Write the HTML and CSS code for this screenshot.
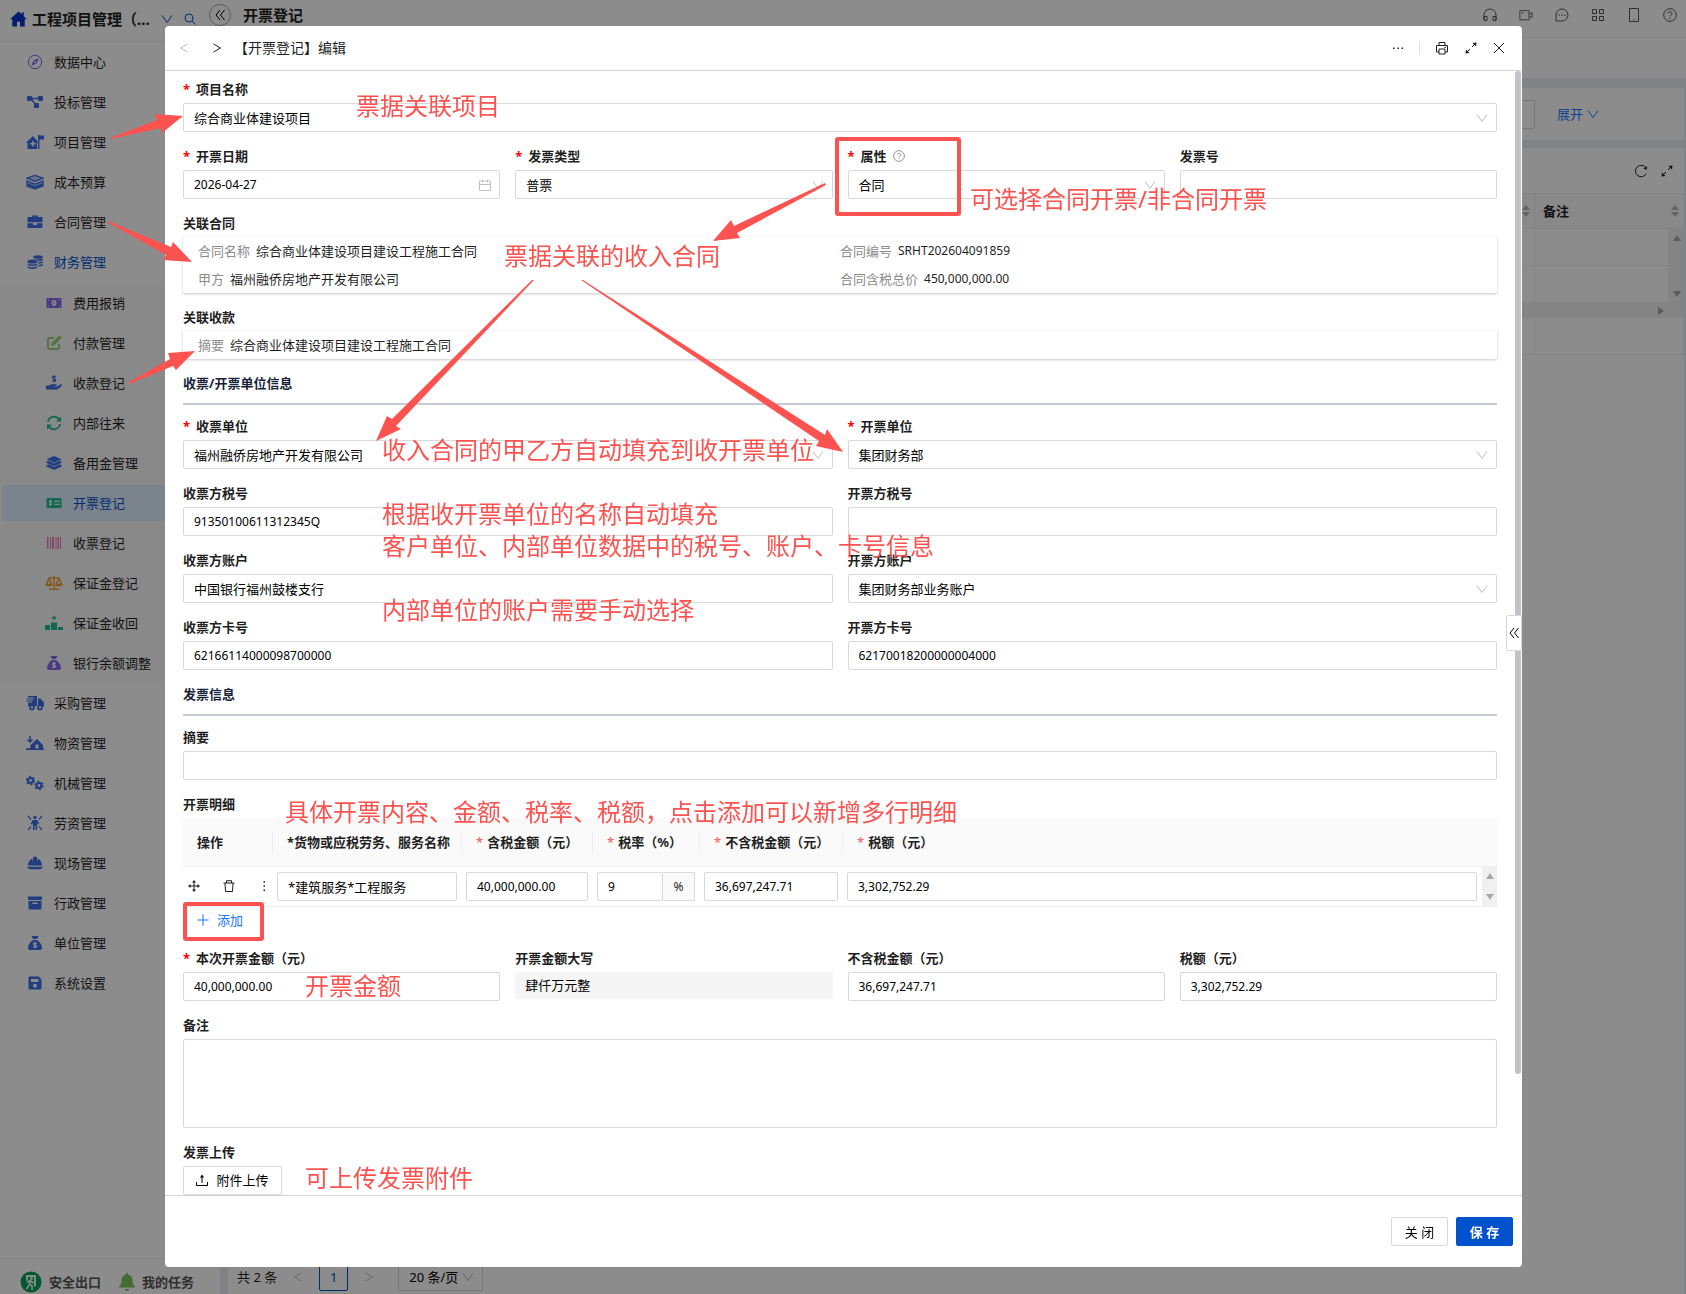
FILE: index.html
```html
<!DOCTYPE html>
<html lang="zh">

<head>
    <meta charset="UTF-8">
    <meta name="viewport" content="width=device-width, initial-scale=1.0">
    <title>开票登记 - 工程项目管理</title>
    <link rel="stylesheet" href="styles.css">
</head>

<body>
    <!-- 图标库 -->
    <svg class="sprite" aria-hidden="true">
        <symbol id="i-home" viewBox="0 0 18 16"><path fill="currentColor" d="M9 0 0 8.3h2.4V16h5v-5h3.2v5h5V8.3H18L14.6 5V1h-2.2v2z"/></symbol>
        <symbol id="i-down" viewBox="0 0 12 12"><path class="ln" d="M1 2.5 6 9.5 11 2.5"/></symbol>
        <symbol id="i-left" viewBox="0 0 12 12"><path class="ln" d="M9.500 2 2.500 6l7 4"/></symbol>
        <symbol id="i-right" viewBox="0 0 12 12"><path class="ln" d="M2.500 2l7 4-7 4"/></symbol>
        <symbol id="i-search" viewBox="0 0 12 12"><circle class="ln" cx="5" cy="5" r="4"/><path class="ln" d="m8 8 3.500 3.500"/></symbol>
        <symbol id="i-dleft" viewBox="0 0 12 12"><path class="ln" d="M6 1 2 6l4 5M10.500 1l-4 5 4 5"/></symbol>
        <symbol id="i-compass" viewBox="0 0 16 16"><circle class="ln" cx="8" cy="8" r="6.700"/><path fill="currentColor" fill-rule="evenodd" d="M11.800 4.200 9.500 9.500 4.200 11.800 6.500 6.500zM8 7a1 1 0 1 0 0 2 1 1 0 0 0 0-2z"/></symbol>
        <symbol id="i-nodes" viewBox="0 0 18 16"><g fill="currentColor"><rect x="1" y="2" width="5" height="5" rx="1"/><rect x="12" y="2" width="5" height="5" rx="1"/><rect x="8" y="9" width="5" height="5" rx="1"/><path d="M5 3.700h8v1.500H5zM5 5.500l1.300-.6L10 10.200l-1.400.6z"/></g></symbol>
        <symbol id="i-house" viewBox="0 0 18 16"><path fill="currentColor" fill-rule="evenodd" d="M7 2 0 8.500h1.500V15h9.500V8.500h1.500zM6.200 7h1.600v2h2v1.600h-2v2H6.200v-2h-2V9h2zM12 15V1h1.400v.6H18v4h-4.600V15z"/></symbol>
        <symbol id="i-book" viewBox="0 0 18 16"><g fill="none" stroke="currentColor" stroke-width="1.300"><path fill="currentColor" fill-opacity=".3" d="M1 4.200 9 1.500l8 2.700-8 3z"/><path fill="currentColor" fill-opacity=".5" d="M1 7v5l8 3 8-3V7l-8 3z"/><path stroke-width="2" d="M1.500 10.500 9 13.500l7.500-3"/></g></symbol>
        <symbol id="i-case" viewBox="0 0 16 16"><path fill="currentColor" fill-rule="evenodd" d="M5 3V1.500h6V3h3.500c.5 0 1 .5 1 1v4.200H.5V4c0-.5.5-1 1-1zM6.500 3h3v-.3h-3zM.5 9.200H6V11h4V9.200h5.500V13c0 .5-.5 1-1 1h-13c-.5 0-1-.5-1-1z"/></symbol>
        <symbol id="i-coins" viewBox="0 0 16 16"><g fill="currentColor"><ellipse cx="11" cy="3" rx="4.800" ry="1.800"/><ellipse cx="5.500" cy="7.500" rx="5" ry="2"/><path d="M.5 9c1.500 2 8.500 2 10 0v1.500c-1.500 2-8.500 2-10 0zM.5 11.800c1.500 2 8.500 2 10 0v1.500c-1.500 2.300-8.500 2.300-10 0zM6.500 4.500c2 1.100 7.500 1.100 9.300-.3V6c-1 .8-2.500 1-4.300 1-.6-1-2.600-1.900-5-2zM11.500 8c1.700 0 3.300-.3 4.300-1v1.500c-.7.800-2.500 1.200-4.300 1.200zM11.500 10.700c1.700 0 3.300-.3 4.300-1v1.500c-.7.800-2.500 1.200-4.300 1.200z"/></g></symbol>
        <symbol id="i-bill" viewBox="0 0 16 16"><path fill="currentColor" fill-rule="evenodd" d="M1.500 3h13c.6 0 1 .4 1 1v8c0 .6-.4 1-1 1h-13c-.6 0-1-.4-1-1V4c0-.6.4-1 1-1zM8 5a2.500 3 0 1 0 0 6 2.500 3 0 0 0 0-6zM2 4.500V6l1.500-1.500zM14 4.500V6l-1.500-1.500zM2 11.500V10l1.500 1.500zM14 11.500V10l-1.500 1.500z"/><path stroke="currentColor" d="M8 6.500v3"/></symbol>
        <symbol id="i-edit" viewBox="0 0 16 16"><path fill="none" stroke="currentColor" stroke-width="1.800" d="M8 3H3.500C2.500 3 2 3.500 2 4.500v8c0 1 .5 1.500 1.500 1.500h8c1 0 1.500-.5 1.500-1.500V9"/><path fill="currentColor" d="M12.700 1c.5-.5 1-.5 1.500 0l.9.9c.5.500.5 1 0 1.500L8.500 10 5 11l1-3.500z"/></symbol>
        <symbol id="i-hand" viewBox="0 0 16 16"><path fill="currentColor" d="M0 10.500h3c1.500-1.500 3-1.500 4.500-1.200h2.300c1.400 0 1.400 1.700 0 1.700H7.500v.5h3.800l3-2c1.300-.7 2.200.5 1.200 1.400L12 14c-.5.300-1 .5-1.500.5H0z"/><path fill="none" stroke="currentColor" stroke-width="1.200" d="M10 1.800C8.500.800 6.500 1.300 6.500 2.500c0 1.600 3.300 1 3.300 2.500 0 1.300-2.300 1.500-3.600.5M8.100 0v7.300"/></symbol>
        <symbol id="i-sync" viewBox="0 0 16 16"><g fill="none" stroke="currentColor" stroke-width="1.700"><path d="M2 7a6 6 0 0 1 11-2.500M14 9a6 6 0 0 1-11 2.500"/></g><path fill="currentColor" d="M15 1.500V6.500H10zM1 14.500V9.500h5z"/></symbol>
        <symbol id="i-layers" viewBox="0 0 16 16"><path fill="currentColor" d="M8 1l7.500 3.300L8 7.700.5 4.300zM.5 6.700l2-1L8 8.400l5.500-2.700 2 1.100v1L8 11.200.5 7.900zM.5 10.300l2-1L8 12l5.500-2.700 2 1v1.200L8 15 .5 11.500z"/></symbol>
        <symbol id="i-check" viewBox="0 0 16 16"><path fill="currentColor" fill-rule="evenodd" d="M1.500 3h13c.6 0 1 .4 1 1v8c0 .6-.4 1-1 1h-13c-.6 0-1-.4-1-1V4c0-.6.4-1 1-1zM8 5.800v1.300h6V5.800zM8 8.700V10h6V8.700z"/><path fill="none" stroke="#fff" d="M5.800 6.200C4.500 5.300 3 6 3.200 6.900c.2 1.200 2.600.9 2.500 2.200-.1.900-1.700 1.100-2.800.4M4.500 4.700v6.600"/></symbol>
        <symbol id="i-bars" viewBox="0 0 16 16"><path fill="currentColor" d="M1 2h1.500v12H1zM4 2h1v12H4zM6 2h2v12H6zM9.500 2h1v12h-1zM11.500 2H13v12h-1.500zM14 2h1v12h-1z"/></symbol>
        <symbol id="i-scale" viewBox="0 0 18 16"><path fill="none" stroke="currentColor" stroke-width="1.500" d="M3 3h12M9 1v13M4 14.200h10M4 3.500 1.200 9.500h5.600zM14 3.500l-2.800 6h5.600z"/><path fill="currentColor" d="M.5 9.200h7c-.5 3-6.500 3-7 0zM10.500 9.200h7c-.5 3-6.500 3-7 0z"/></symbol>
        <symbol id="i-rank" viewBox="0 0 18 16"><path fill="currentColor" d="M0 10h5v5H0zM6 7.500h6V15H6zM13 12h5v3h-5zM9 0l.8 1.700 1.800.2-1.300 1.300.3 1.800L9 4.100 7.400 5l.3-1.800L6.400 1.900l1.800-.2z"/></symbol>
        <symbol id="i-bag" viewBox="0 0 16 16"><path fill="currentColor" d="M4.500 1h7L10 4H6zM6 5h4c3 2 5 5 5 8 0 1.300-.7 2-2 2H3c-1.300 0-2-.7-2-2 0-3 2-6 5-8z"/><path fill="none" stroke="#fff" stroke-width="1.100" d="M9.800 8.500C8.500 7.500 6.500 7.800 6.500 9c0 1.500 3.200.8 3.200 2.300 0 1.200-2.200 1.300-3.500.5M8 6.800v6.500"/></symbol>
        <symbol id="i-truck" viewBox="0 0 18 16"><path fill="currentColor" d="M2 1h9v10H2V7.500h4V6.500H0v-1h7v-1H1v-1h7v-1H2zM12 3.500h2.500L18 7.500V11.500h-6z"/><g fill="#fff" stroke="currentColor" stroke-width="1.700"><circle cx="6" cy="12.500" r="2"/><circle cx="14" cy="12.500" r="2"/></g></symbol>
        <symbol id="i-store" viewBox="0 0 18 16"><path fill="currentColor" fill-rule="evenodd" d="M0 13.200h4.500V10L11 4l6 6v3.200h1V15H0zM9.500 9.500v4h3v-4z"/><path fill="none" stroke="currentColor" stroke-width="1.500" d="M4 1v6M1.500 4.500 4 7l2.500-2.500"/></symbol>
        <symbol id="i-gears" viewBox="0 0 18 16"><g fill="none" stroke="currentColor"><circle cx="4.500" cy="5.500" r="2.500" stroke-width="2.200"/><circle cx="4.500" cy="5.500" r="4" stroke-width="1.500" stroke-dasharray="2 2.190"/><circle cx="13" cy="10.500" r="2.500" stroke-width="2.200"/><circle cx="13" cy="10.500" r="4" stroke-width="1.500" stroke-dasharray="2 2.190"/></g></symbol>
        <symbol id="i-man" viewBox="0 0 16 16"><circle cx="8" cy="2.500" r="1.700" fill="currentColor"/><path fill="currentColor" d="M5.500 5h5l1.800 4-1.200.6-1-1.800V15H8.500v-4h-1v4H5.900V7.800l-1 1.800L3.700 9z"/><path stroke="currentColor" stroke-width="1.200" d="m1 1 3 3.500M15 1l-3 3.500M1 15l3-3.500M15 15l-3-3.500"/></symbol>
        <symbol id="i-helmet" viewBox="0 0 16 16"><path fill="currentColor" d="M1 10.500C1 7 3 4.500 5.300 3.800L6 8V2.500c0-.5.300-.8.800-.8h2.400c.5 0 .8.300.8.800V8l.7-4.200C13 4.500 15 7 15 10.500zM0 11.700h16c-1 2.100-2.500 2.500-4 2.500H4c-1.500 0-3-.4-4-2.500z"/></symbol>
        <symbol id="i-box" viewBox="0 0 16 16"><path fill="currentColor" fill-rule="evenodd" d="M1 1.500h14V5H1zM1.500 6h13v7c0 .8-.5 1.500-1.500 1.500H3c-1 0-1.500-.7-1.500-1.500zM5.500 7.500V9h5V7.500z"/></symbol>
        <symbol id="i-disk" viewBox="0 0 16 16"><path fill="currentColor" fill-rule="evenodd" d="M3 1.500h8.500l3 3V13c0 .9-.6 1.500-1.500 1.500H3c-.9 0-1.500-.6-1.500-1.500V3c0-.9.600-1.500 1.500-1.500zM4 4v3h7.500V4zM8 8.700a2 2 0 1 0 0 4 2 2 0 0 0 0-4z"/></symbol>
        <symbol id="i-exit" viewBox="0 0 22 22"><circle cx="11" cy="11" r="10.500" fill="#0a9f5d"/><path fill="#e8fff2" d="M6 4h10v11l-2 1V6H8v3l-2 1z"/><circle cx="11.500" cy="7.500" r="1.400" fill="#e8fff2"/><path fill="none" stroke="#e8fff2" stroke-width="1.600" d="M11 9.500 9.500 13l2.500 2v4M9.500 13.500l-3 4.500M7 11.500l3-2 3.500 2.500"/></symbol>
        <symbol id="i-bell" viewBox="0 0 16 18"><path fill="currentColor" d="M7 0h2v1.500c3 .5 4.500 2.700 4.500 5.500 0 4 .7 5 2.500 6.500v1H0v-1C1.800 12 2.500 11 2.500 7 2.500 4.200 4 2 7 1.500zM6 16h4c0 2.500-4 2.500-4 0z"/></symbol>
        <symbol id="i-phone" viewBox="0 0 14 14"><path class="ln" d="M1 12V7a6 6 0 0 1 12 0v5M1 8.500h3v4H1zM10 8.500h3v4h-3z"/></symbol>
        <symbol id="i-video" viewBox="0 0 16 14"><path class="ln" d="M1 2h10.500v10.500H1zM3 4.500h2.500M11.500 6 15 4.500v5.500l-3.500-1.500"/></symbol>
        <symbol id="i-chat" viewBox="0 0 14 14"><path class="ln" d="M1 13V7a6 6 0 1 1 6 6z"/><path fill="currentColor" d="M3.500 6.400h1.300v1.300H3.500zM6.400 6.400h1.300v1.300H6.400zM9.300 6.400h1.300v1.300H9.300z"/></symbol>
        <symbol id="i-apps" viewBox="0 0 14 14"><path class="ln" d="M1.500 1.500h4v4h-4zM8.500 1.500h4v4h-4zM1.500 8.500h4v4h-4zM8.500 8.500h4v4h-4z"/></symbol>
        <symbol id="i-mobile" viewBox="0 0 14 14"><path class="ln" d="M2.500.5h9v13h-9zM6.500 11.500h1"/></symbol>
        <symbol id="i-help" viewBox="0 0 14 14"><circle class="ln" cx="7" cy="7" r="6.300"/><path class="ln" d="M5 5.700c0-2.500 4-2.500 4 0C9 7 7 6.800 7 8.500M7 9.700v1.200"/></symbol>
        <symbol id="i-print" viewBox="0 0 14 14"><path class="ln" d="M4 4.500V1.500h6v3M4 11H1.500V4.500h11V11H10M4 8h6v5H4zM9.500 6.300h1.500"/></symbol>
        <symbol id="i-expand" viewBox="0 0 14 14"><path fill="currentColor" d="M8.500 2 12.500 1.500 12 5.500zM1.500 12.500 2 8.500 5.500 12z"/><path class="ln" d="M11.500 2.500 8 6M6 8l-3.500 3.500"/></symbol>
        <symbol id="i-close" viewBox="0 0 12 12"><path class="ln" d="m1 1 10 10M11 1 1 11"/></symbol>
        <symbol id="i-dots" viewBox="0 0 12 12"><path fill="currentColor" d="M1 5.500h1.500V7H1zM5.300 5.500h1.500V7H5.300zM9.500 5.500H11V7H9.500z"/></symbol>
        <symbol id="i-vdots" viewBox="0 0 12 12"><path fill="currentColor" d="M5.500 1H7v1.500H5.500zM5.500 5.300H7v1.500H5.500zM5.500 9.500H7V11H5.500z"/></symbol>
        <symbol id="i-reload" viewBox="0 0 14 14"><path class="ln" d="M12.300 9.500A5.700 5.700 0 1 1 12 4"/><path fill="currentColor" d="m13 2-.3 4L9.500 4.500z"/></symbol>
        <symbol id="i-sort" viewBox="0 0 8 12"><path fill="currentColor" d="M4 0l4 5H0zM4 12l4-5H0z"/></symbol>
        <symbol id="i-cal" viewBox="0 0 12 12"><path class="ln" d="M.5 2h11v9.500H.5zM.5 5.500h11M3.500.5v3M8.500.5v3"/></symbol>
        <symbol id="i-move" viewBox="0 0 12 12"><path class="ln" d="M6 1v10M1 6h10"/><path fill="currentColor" d="m6 0 2 2.500H4zM6 12l2-2.500H4zM0 6l2.500-2v4zM12 6 9.500 4v4z"/></symbol>
        <symbol id="i-trash" viewBox="0 0 12 12"><path class="ln" d="M.5 3h11M3.500 3V.7h5V3M2 3l.5 8.500h7L10 3"/></symbol>
        <symbol id="i-plus" viewBox="0 0 12 12"><path class="ln" d="M6 .5v11M.5 6h11"/></symbol>
        <symbol id="i-upload" viewBox="0 0 12 12"><path class="ln" d="M.5 8v3.500h11V8M6 9V2.500"/><path fill="currentColor" d="m6 .5 2 3H4z"/></symbol>
        <symbol id="i-tri" viewBox="0 0 8 8"><path fill="currentColor" d="m4 1 4 6H0z"/></symbol>
    </svg>

    <div class="app">
        <!-- 左侧菜单 -->
        <aside class="sidebar">
            <div class="brand">
                <svg class="brand-icon"><use href="#i-home"/></svg>
                <strong>工程项目管理（...</strong>
                <svg class="icon blue"><use href="#i-down"/></svg>
                <svg class="icon blue"><use href="#i-search"/></svg>
            </div>
            <nav class="menu">
                <a href="#"><svg class="c-purple"><use href="#i-compass"/></svg>数据中心</a>
                <a href="#"><svg><use href="#i-nodes"/></svg>投标管理</a>
                <a href="#"><svg><use href="#i-house"/></svg>项目管理</a>
                <a href="#"><svg><use href="#i-book"/></svg>成本预算</a>
                <a href="#"><svg><use href="#i-case"/></svg>合同管理</a>
                <a href="#" class="open"><svg><use href="#i-coins"/></svg>财务管理</a>
            </nav>
            <nav class="menu submenu">
                <a href="#"><svg class="c-purple"><use href="#i-bill"/></svg>费用报销</a>
                <a href="#"><svg class="c-green"><use href="#i-edit"/></svg>付款管理</a>
                <a href="#"><svg><use href="#i-hand"/></svg>收款登记</a>
                <a href="#"><svg class="c-teal"><use href="#i-sync"/></svg>内部往来</a>
                <a href="#"><svg><use href="#i-layers"/></svg>备用金管理</a>
                <a href="#" class="active"><svg class="c-teal"><use href="#i-check"/></svg>开票登记</a>
                <a href="#"><svg class="c-pink"><use href="#i-bars"/></svg>收票登记</a>
                <a href="#"><svg class="c-orange"><use href="#i-scale"/></svg>保证金登记</a>
                <a href="#"><svg class="c-teal"><use href="#i-rank"/></svg>保证金收回</a>
                <a href="#"><svg class="c-purple"><use href="#i-bag"/></svg>银行余额调整</a>
            </nav>
            <nav class="menu">
                <a href="#"><svg><use href="#i-truck"/></svg>采购管理</a>
                <a href="#"><svg><use href="#i-store"/></svg>物资管理</a>
                <a href="#"><svg><use href="#i-gears"/></svg>机械管理</a>
                <a href="#"><svg><use href="#i-man"/></svg>劳资管理</a>
                <a href="#"><svg><use href="#i-helmet"/></svg>现场管理</a>
                <a href="#"><svg><use href="#i-box"/></svg>行政管理</a>
                <a href="#"><svg><use href="#i-bag"/></svg>单位管理</a>
                <a href="#"><svg><use href="#i-disk"/></svg>系统设置</a>
            </nav>
            <div class="side-foot">
                <a href="#"><svg class="exit"><use href="#i-exit"/></svg>安全出口</a>
                <a href="#"><svg class="bell"><use href="#i-bell"/></svg>我的任务</a>
            </div>
        </aside>

        <!-- 列表页 -->
        <div class="page">
            <header class="topbar">
                <button type="button" class="fold" aria-label="收起菜单"><svg class="icon"><use href="#i-dleft"/></svg></button>
                <h1>开票登记</h1>
                <div class="tools">
                    <svg><use href="#i-phone"/></svg>
                    <svg><use href="#i-video"/></svg>
                    <svg><use href="#i-chat"/></svg>
                    <svg><use href="#i-apps"/></svg>
                    <svg><use href="#i-mobile"/></svg>
                    <svg><use href="#i-help"/></svg>
                </div>
            </header>
            <div class="tabs"></div>
            <div class="content">
                <div class="filter">
                    <input type="text" aria-label="查询条件">
                    <a href="#">展开 <svg class="icon"><use href="#i-down"/></svg></a>
                </div>
                <div class="list">
                    <div class="list-tools">
                        <svg><use href="#i-reload"/></svg>
                        <svg><use href="#i-expand"/></svg>
                    </div>
                    <div class="list-row list-head">
                        <div><svg class="sort"><use href="#i-sort"/></svg></div>
                        <div><b>备注</b><svg class="sort"><use href="#i-sort"/></svg></div>
                    </div>
                    <div class="list-scroll">
                        <div class="list-rows">
                            <div class="list-row"><div></div><div></div></div>
                            <div class="list-row"><div></div><div></div></div>
                        </div>
                        <div class="vbar"><svg><use href="#i-tri"/></svg><svg class="flip"><use href="#i-tri"/></svg></div>
                    </div>
                    <div class="hbar"><svg class="turn"><use href="#i-tri"/></svg></div>
                    <div class="list-row"><div></div><div></div></div>
                    <div class="pager">
                        <span>共 2 条</span>
                        <svg class="icon"><use href="#i-left"/></svg>
                        <button type="button">1</button>
                        <svg class="icon"><use href="#i-right"/></svg>
                        <div class="field-box page-size">
                            <select aria-label="每页条数"><option>20 条/页</option></select>
                            <svg class="icon"><use href="#i-down"/></svg>
                        </div>
                    </div>
                </div>
            </div>
        </div>
    </div>

    <!-- 编辑弹窗 -->
    <div class="mask">
        <form class="modal">
            <header class="modal-head">
                <svg class="icon dim"><use href="#i-left"/></svg>
                <svg class="icon"><use href="#i-right"/></svg>
                <h2>【开票登记】编辑</h2>
                <svg class="icon"><use href="#i-dots"/></svg>
                <i class="split"></i>
                <svg><use href="#i-print"/></svg>
                <svg><use href="#i-expand"/></svg>
                <svg class="icon"><use href="#i-close"/></svg>
            </header>

            <div class="modal-body">
                <div class="item">
                    <label for="project" class="required">项目名称</label>
                    <div class="field-box">
                        <select id="project"><option>综合商业体建设项目</option></select>
                        <svg class="icon"><use href="#i-down"/></svg>
                    </div>
                </div>
                <div class="grid four">
                    <div class="item">
                        <label for="date" class="required">开票日期</label>
                        <div class="field-box">
                            <input type="text" id="date" value="2026-04-27">
                            <svg class="icon"><use href="#i-cal"/></svg>
                        </div>
                    </div>
                    <div class="item">
                        <label for="type" class="required">发票类型</label>
                        <div class="field-box">
                            <select id="type"><option>普票</option></select>
                            <svg class="icon"><use href="#i-down"/></svg>
                        </div>
                    </div>
                    <div class="item">
                        <label for="attr" class="required">属性 <svg class="icon help"><use href="#i-help"/></svg></label>
                        <div class="field-box">
                            <select id="attr"><option>合同</option></select>
                            <svg class="icon"><use href="#i-down"/></svg>
                        </div>
                    </div>
                    <div class="item">
                        <label for="invoice-no">发票号</label>
                        <input type="text" id="invoice-no">
                    </div>
                </div>
                <div class="item">
                    <h3>关联合同</h3>
                    <dl class="card">
                        <div><dt>合同名称</dt><dd>综合商业体建设项目建设工程施工合同</dd></div>
                        <div><dt>合同编号</dt><dd class="num">SRHT202604091859</dd></div>
                        <div><dt>甲方</dt><dd>福州融侨房地产开发有限公司</dd></div>
                        <div><dt>合同含税总价</dt><dd class="num">450,000,000.00</dd></div>
                    </dl>
                </div>
                <div class="item">
                    <h3>关联收款</h3>
                    <dl class="card">
                        <div><dt>摘要</dt><dd>综合商业体建设项目建设工程施工合同</dd></div>
                    </dl>
                </div>

                <h3 class="section">收票/开票单位信息</h3>
                <div class="grid two">
                    <div class="item">
                        <label for="recv-unit" class="required">收票单位</label>
                        <div class="field-box">
                            <select id="recv-unit"><option>福州融侨房地产开发有限公司</option></select>
                            <svg class="icon"><use href="#i-down"/></svg>
                        </div>
                    </div>
                    <div class="item">
                        <label for="send-unit" class="required">开票单位</label>
                        <div class="field-box">
                            <select id="send-unit"><option>集团财务部</option></select>
                            <svg class="icon"><use href="#i-down"/></svg>
                        </div>
                    </div>
                    <div class="item">
                        <label for="recv-tax">收票方税号</label>
                        <input type="text" id="recv-tax" value="91350100611312345Q">
                    </div>
                    <div class="item">
                        <label for="send-tax">开票方税号</label>
                        <input type="text" id="send-tax">
                    </div>
                    <div class="item">
                        <label for="recv-account">收票方账户</label>
                        <input type="text" id="recv-account" class="cn" value="中国银行福州鼓楼支行">
                    </div>
                    <div class="item">
                        <label for="send-account">开票方账户</label>
                        <div class="field-box">
                            <select id="send-account"><option>集团财务部业务账户</option></select>
                            <svg class="icon"><use href="#i-down"/></svg>
                        </div>
                    </div>
                    <div class="item">
                        <label for="recv-card">收票方卡号</label>
                        <input type="text" id="recv-card" value="62166114000098700000">
                    </div>
                    <div class="item">
                        <label for="send-card">开票方卡号</label>
                        <input type="text" id="send-card" value="62170018200000004000">
                    </div>
                </div>

                <h3 class="section">发票信息</h3>
                <div class="item">
                    <label for="summary">摘要</label>
                    <input type="text" id="summary">
                </div>
                <div class="item">
                    <h3>开票明细</h3>
                    <div class="detail">
                        <table>
                            <thead>
                                <tr>
                                    <th class="w-op">操作</th>
                                    <th class="w-name">*货物或应税劳务、服务名称</th>
                                    <th class="w-amount"><em>*</em>含税金额（元）</th>
                                    <th class="w-rate"><em>*</em>税率（%）</th>
                                    <th class="w-net"><em>*</em>不含税金额（元）</th>
                                    <th><em>*</em>税额（元）</th>
                                    <th class="w-bar"></th>
                                </tr>
                            </thead>
                            <tbody>
                                <tr>
                                    <td>
                                        <div class="ops">
                                            <svg class="icon"><use href="#i-move"/></svg>
                                            <svg class="icon"><use href="#i-trash"/></svg>
                                            <svg class="icon"><use href="#i-vdots"/></svg>
                                        </div>
                                    </td>
                                    <td><input type="text" class="cn" aria-label="货物或应税劳务、服务名称" value="*建筑服务*工程服务"></td>
                                    <td><input type="text" aria-label="含税金额" value="40,000,000.00"></td>
                                    <td>
                                        <div class="rate"><input type="text" aria-label="税率" value="9"><span>%</span></div>
                                    </td>
                                    <td><input type="text" aria-label="不含税金额" value="36,697,247.71"></td>
                                    <td><input type="text" aria-label="税额" value="3,302,752.29"></td>
                                    <td class="bar"><div class="vbar"><svg><use href="#i-tri"/></svg><svg class="flip"><use href="#i-tri"/></svg></div></td>
                                </tr>
                            </tbody>
                        </table>
                        <button type="button" class="add"><svg class="icon"><use href="#i-plus"/></svg>添加</button>
                    </div>
                </div>
                <div class="grid four">
                    <div class="item">
                        <label for="amount" class="required">本次开票金额（元）</label>
                        <input type="text" id="amount" value="40,000,000.00">
                    </div>
                    <div class="item">
                        <label for="amount-cn">开票金额大写</label>
                        <output id="amount-cn">肆仟万元整</output>
                    </div>
                    <div class="item">
                        <label for="net">不含税金额（元）</label>
                        <input type="text" id="net" value="36,697,247.71">
                    </div>
                    <div class="item">
                        <label for="tax">税额（元）</label>
                        <input type="text" id="tax" value="3,302,752.29">
                    </div>
                </div>
                <div class="item">
                    <label for="remark">备注</label>
                    <textarea id="remark"></textarea>
                </div>
                <div class="item">
                    <h3>发票上传</h3>
                    <button type="button" class="upload"><svg class="icon"><use href="#i-upload"/></svg>附件上传</button>
                </div>
            </div>

            <footer class="modal-foot">
                <button type="button">关 闭</button>
                <button type="submit" class="primary">保 存</button>
            </footer>

            <div class="scroll-thumb"></div>
            <button type="button" class="side-tab" aria-label="展开侧栏"><svg class="icon"><use href="#i-dleft"/></svg></button>
        </form>
    </div>

    <!-- 批注 -->
    <div class="notes">
        <svg>
            <g fill="#fc5350">
                <path d="M110 138 157 120 155 114 183 116 162 133 161 128 111 139z"/>
                <path d="M108 221 171 247 173 242 192 262 163 260 166 255 107 222z"/>
                <path d="M129 382 170 359 168 353 195 351 176 370 173 366 129 384z"/>
                <path d="M825 183 734 226 731 220 713 241 740 238 737 233 826 185z"/>
                <path d="M532 280 392 419 387 416 376 441 401 429 396 426 534 280z"/>
                <path d="M583 280 825 435 827 429 843 452 816 446 819 441 581 280z"/>
            </g>
            <g fill="none" stroke="#fc5350" stroke-width="4">
                <rect x="837" y="139" width="122" height="75" rx="1"/>
                <rect x="185" y="904" width="77" height="35" rx="1"/>
            </g>
        </svg>
        <p class="n-project">票据关联项目</p>
        <p class="n-attr">可选择合同开票/非合同开票</p>
        <p class="n-contract">票据关联的收入合同</p>
        <p class="n-unit">收入合同的甲乙方自动填充到收开票单位</p>
        <p class="n-fill">根据收开票单位的名称自动填充<br>客户单位、内部单位数据中的税号、账户、卡号信息</p>
        <p class="n-account">内部单位的账户需要手动选择</p>
        <p class="n-detail">具体开票内容、金额、税率、税额，点击添加可以新增多行明细</p>
        <p class="n-amount">开票金额</p>
        <p class="n-upload">可上传发票附件</p>
    </div>
</body>

</html>
```

FILE: styles.css
```css
/* 页面基本样式 */
* {
    box-sizing: border-box;
}

body {
    margin: 0;
    height: 100vh;
    overflow: hidden;
    font-family: "Noto Sans", "Noto Sans CJK SC", sans-serif;
    font-size: 13px;
    line-height: 20px;
    color: #1f1f1f;
}

h1, h2, h3, p, dl, dd {
    margin: 0;
}

a {
    color: inherit;
    text-decoration: none;
}

svg {
    flex: none;
    display: block;
    width: 14px;
    height: 14px;
}

.sprite {
    position: absolute;
    width: 0;
    height: 0;
}

.ln {
    fill: none;
    stroke: currentColor;
}

.icon {
    width: 12px;
    height: 12px;
}

.blue {
    color: #0052cc;
}

button, input, select, textarea, output {
    font-family: inherit;
    font-size: 13px;
    line-height: 20px;
    color: #000;
    background-color: #fff;
    border: 1px solid #d9d9d9;
    border-radius: 2px;
}

button {
    display: flex;
    align-items: center;
    justify-content: center;
    padding: 0;
    cursor: pointer;
}

input, select, textarea, output {
    display: block;
    width: 100%;
    height: 29px;
    padding: 0 10px;
    outline: none;
}

input, .num {
    font-size: 12px;
}

input.cn {
    font-size: 13px;
}

select {
    appearance: none;
    padding: 0 24px 0 10px;
}

/* 带图标的输入框 */
.field-box {
    position: relative;
}

.field-box > .icon {
    position: absolute;
    right: 9px;
    top: 9px;
    color: #bfbfbf;
    pointer-events: none;
}

/* 主框架 */
.app {
    display: flex;
    height: 100vh;
}

.sidebar {
    display: flex;
    flex-direction: column;
    width: 220px;
    background-color: #fff;
}

.brand {
    display: flex;
    align-items: center;
    gap: 11px;
    height: 42px;
    padding: 0 0 4px 10px;
    border-bottom: 1px solid #f0f0f0;
    font-size: 15px;
}

.brand strong {
    margin-left: -6px;
    white-space: nowrap;
}

.brand-icon {
    width: 17px;
    height: 16px;
    color: #0a32c8;
}

.menu {
    display: flex;
    flex-direction: column;
    gap: 4px;
    padding: 2px 0 3px;
}

.menu a {
    display: flex;
    align-items: center;
    gap: 10px;
    height: 36px;
    padding-left: 26px;
}

.menu svg {
    width: 18px;
    height: 16px;
    color: #3c6de8;
}

.submenu {
    padding: 2px 0 2px 2px;
    background-color: #fafafa;
}

.submenu a {
    padding-left: 43px;
}

.menu .open, .menu .active {
    color: #0052cc;
}

.menu .active {
    background-color: #e0f0ff;
    border-radius: 4px;
}

.menu .c-purple { color: #8468f0; }
.menu .c-green { color: #95cf78; }
.menu .c-teal { color: #1cc08f; }
.menu .c-pink { color: #ee80bd; }
.menu .c-orange { color: #f0a032; }

.side-foot {
    display: flex;
    gap: 18px;
    height: 36px;
    margin-top: auto;
    padding: 10px 0 0 20px;
    border-top: 1px solid #f0f0f0;
    font-weight: bold;
    color: #555;
}

.side-foot a {
    display: flex;
    align-items: center;
    gap: 7px;
    height: 26px;
}

.exit {
    width: 22px;
    height: 22px;
}

.bell {
    width: 16px;
    height: 18px;
    color: #7cc45c;
}

/* 列表页 */
.page {
    flex: 1;
    display: flex;
    flex-direction: column;
    min-width: 0;
    background-color: #e9edf3;
}

.topbar {
    display: flex;
    align-items: center;
    height: 38px;
    padding: 0 9px 8px 0;
    background-color: #fff;
    border-bottom: 1px solid #f0f0f0;
    border-left: 1px solid #f0f0f0;
}

.fold {
    width: 22px;
    height: 22px;
    margin-left: -12px;
    border-color: #aaa;
    border-radius: 50%;
}

h1 {
    margin-left: 12px;
    font-size: 15px;
}

.tools {
    display: flex;
    gap: 22px;
    margin-left: auto;
    color: #555;
}

.tabs {
    height: 40px;
    background-color: #fff;
}

.content {
    flex: 1;
    display: flex;
    flex-direction: column;
    gap: 8px;
    padding: 10px 2px 0 8px;
}

.filter {
    display: flex;
    align-items: center;
    justify-content: flex-end;
    gap: 22px;
    height: 52px;
    padding-right: 85px;
    background-color: #fff;
    color: #1677ff;
}

.filter input {
    width: 300px;
}

.filter a {
    display: flex;
    align-items: center;
    gap: 4px;
}

.list {
    flex: 1;
    display: flex;
    flex-direction: column;
    background-color: #fff;
}

.list-tools {
    display: flex;
    align-items: center;
    justify-content: flex-end;
    gap: 12px;
    height: 45px;
    padding-right: 10px;
}

.list-row {
    display: grid;
    grid-template-columns: 1fr 149px;
    height: 37px;
    border-bottom: 1px solid #f0f0f0;
}

.list-row > div {
    display: flex;
    align-items: center;
    padding: 0 4px 0 8px;
    border-right: 1px solid #f0f0f0;
}

.list-head {
    height: 36px;
    background-color: #fafafa;
    border-top: 1px solid #f0f0f0;
}

.sort {
    width: 8px;
    height: 12px;
    margin-left: auto;
    color: #b5b5b5;
}

.list-scroll {
    display: flex;
}

.list-rows {
    flex: 1;
}

.list-rows .list-row {
    grid-template-columns: 1fr 134px;
}

.vbar {
    display: flex;
    flex-direction: column;
    align-items: center;
    justify-content: space-between;
    width: 15px;
    padding: 5px 0;
    background-color: #f0f0f0;
    color: #a8a8a8;
}

.vbar svg, .hbar svg {
    width: 8px;
    height: 8px;
}

.flip {
    transform: rotate(180deg);
}

.turn {
    transform: rotate(90deg);
}

.hbar {
    display: flex;
    align-items: center;
    justify-content: flex-end;
    height: 15px;
    padding-right: 19px;
    background-color: #f0f0f0;
    color: #a8a8a8;
}

.pager {
    display: flex;
    align-items: center;
    gap: 15px;
    margin-top: auto;
    padding: 0 9px 3px;
}

.pager > .icon {
    color: #bfbfbf;
}

.pager button {
    width: 29px;
    height: 29px;
    border-color: #0052cc;
    color: #0052cc;
}

.page-size {
    margin-left: 8px;
}

.page-size select {
    width: 85px;
}

/* 编辑弹窗 */
.mask {
    position: fixed;
    inset: 0;
    display: flex;
    padding: 26px 164px 27px 165px;
    background-color: rgba(0, 0, 0, 0.45);
}

.modal {
    position: relative;
    flex: 1;
    display: flex;
    flex-direction: column;
    min-width: 0;
    background-color: #fff;
    border-radius: 4px;
    overflow: hidden;
}

.modal-head {
    flex: none;
    display: flex;
    align-items: center;
    gap: 15px;
    height: 45px;
    padding: 0 17px 0 13px;
    border-bottom: 1px solid #d4d4d4;
}

.modal-head h2 {
    margin-left: -4px;
    margin-right: auto;
    font-size: 14px;
    font-weight: normal;
}

.modal-head .dim {
    margin-right: 6px;
    color: #bbb;
}

.split {
    width: 1px;
    height: 12px;
    background-color: #e0e0e0;
}

.modal-body {
    flex: 1;
    display: flex;
    flex-direction: column;
    gap: 14px;
    min-height: 0;
    padding: 8px 25px 0 18px;
    overflow: hidden;
}

.modal-body > * {
    flex: none;
}

.grid {
    display: grid;
    gap: 14px 15px;
}

.four {
    grid-template-columns: repeat(4, 1fr);
}

.two {
    grid-template-columns: repeat(2, 1fr);
}

.item > label, h3 {
    display: flex;
    align-items: center;
    height: 20px;
    font-size: 13px;
    font-weight: bold;
}

.item > label, .item > h3 {
    margin-bottom: 4px;
}

.required::before {
    content: "*";
    width: 13px;
    color: #f00;
}

.help {
    margin-left: 6px;
    color: #888;
}

.card {
    display: grid;
    grid-template-columns: 1fr 1fr;
    padding: 0 15px;
    border-radius: 2px;
    box-shadow: 0 1px 3px rgba(0, 0, 0, 0.22);
}

.card > div {
    display: flex;
    align-items: center;
    gap: 6px;
    height: 28px;
}

.card dt {
    color: #8c8c8c;
}

.card + .section {
    margin-top: 1px;
}

.section {
    height: 32px;
    margin-bottom: -3px;
    padding-bottom: 10px;
    border-bottom: 2px solid #c8cbd3;
    color: #172338;
}

/* 开票明细表格 */
table {
    width: 100%;
    table-layout: fixed;
    border-collapse: collapse;
}

th {
    position: relative;
    height: 48px;
    padding: 0 0 0 14px;
    background-color: #fafafa;
    border-bottom: 1px solid #f0f0f0;
    text-align: left;
    white-space: nowrap;
}

th:not(:nth-last-child(-n+2))::after {
    content: "";
    position: absolute;
    right: 0;
    top: 14px;
    height: 20px;
    border-right: 1px solid #ececec;
}

th em {
    margin-right: 4px;
    font-style: normal;
    font-weight: normal;
    color: #fc5350;
}

td {
    height: 39px;
    padding: 0 5px 0 4px;
    border-bottom: 1px solid #f0f0f0;
}

.w-op { width: 90px; }
.w-name { width: 189px; }
.w-amount { width: 131px; }
.w-rate { width: 107px; }
.w-net { width: 143px; }
.w-bar { width: 15px; }

.ops {
    display: flex;
    gap: 23px;
    padding-left: 1px;
}

td.bar {
    padding: 0;
}

.bar .vbar {
    height: 39px;
}

.rate {
    display: flex;
}

.rate span {
    width: 32px;
    border: 1px solid #d9d9d9;
    border-left: none;
    background-color: #fafafa;
    font-size: 12px;
    line-height: 27px;
    text-align: center;
}

.rate input {
    flex: 1;
    min-width: 0;
}

.add {
    gap: 8px;
    height: 27px;
    padding: 0 14px;
    border: none;
    color: #1677ff;
}

output {
    height: 27px;
    padding: 3px 10px;
    border: none;
    background-color: #f5f5f5;
}

textarea {
    height: 89px;
    resize: none;
}

.upload {
    gap: 8px;
    width: 99px;
    height: 29px;
}

.modal-foot {
    flex: none;
    display: flex;
    align-items: center;
    justify-content: flex-end;
    gap: 8px;
    height: 72px;
    padding-right: 9px;
    border-top: 1px solid #d4d4d4;
}

.modal-foot button {
    width: 57px;
    height: 29px;
}

.modal-foot .primary {
    border-color: #0052cc;
    background-color: #0052cc;
    color: #fff;
    font-weight: bold;
}

.scroll-thumb {
    position: absolute;
    top: 45px;
    right: 1px;
    width: 6px;
    height: 1003px;
    border-radius: 3px;
    background-color: #c1c3c9;
}

.side-tab {
    position: absolute;
    top: 589px;
    right: 0;
    width: 16px;
    height: 36px;
}

/* 批注 */
.notes {
    position: fixed;
    inset: 0;
    pointer-events: none;
    color: #fc5350;
    font-size: 24px;
    line-height: 32px;
    white-space: nowrap;
}

.notes svg {
    width: 100%;
    height: 100%;
}

.notes p {
    position: absolute;
}

.n-project { left: 356px; top: 90px; }
.n-attr { left: 970px; top: 183px; }
.n-contract { left: 504px; top: 240px; }
.n-unit { left: 382px; top: 434px; }
.n-fill { left: 382px; top: 498px; }
.n-account { left: 382px; top: 594px; }
.n-detail { left: 285px; top: 796px; }
.n-amount { left: 305px; top: 970px; }
.n-upload { left: 305px; top: 1162px; }
```
